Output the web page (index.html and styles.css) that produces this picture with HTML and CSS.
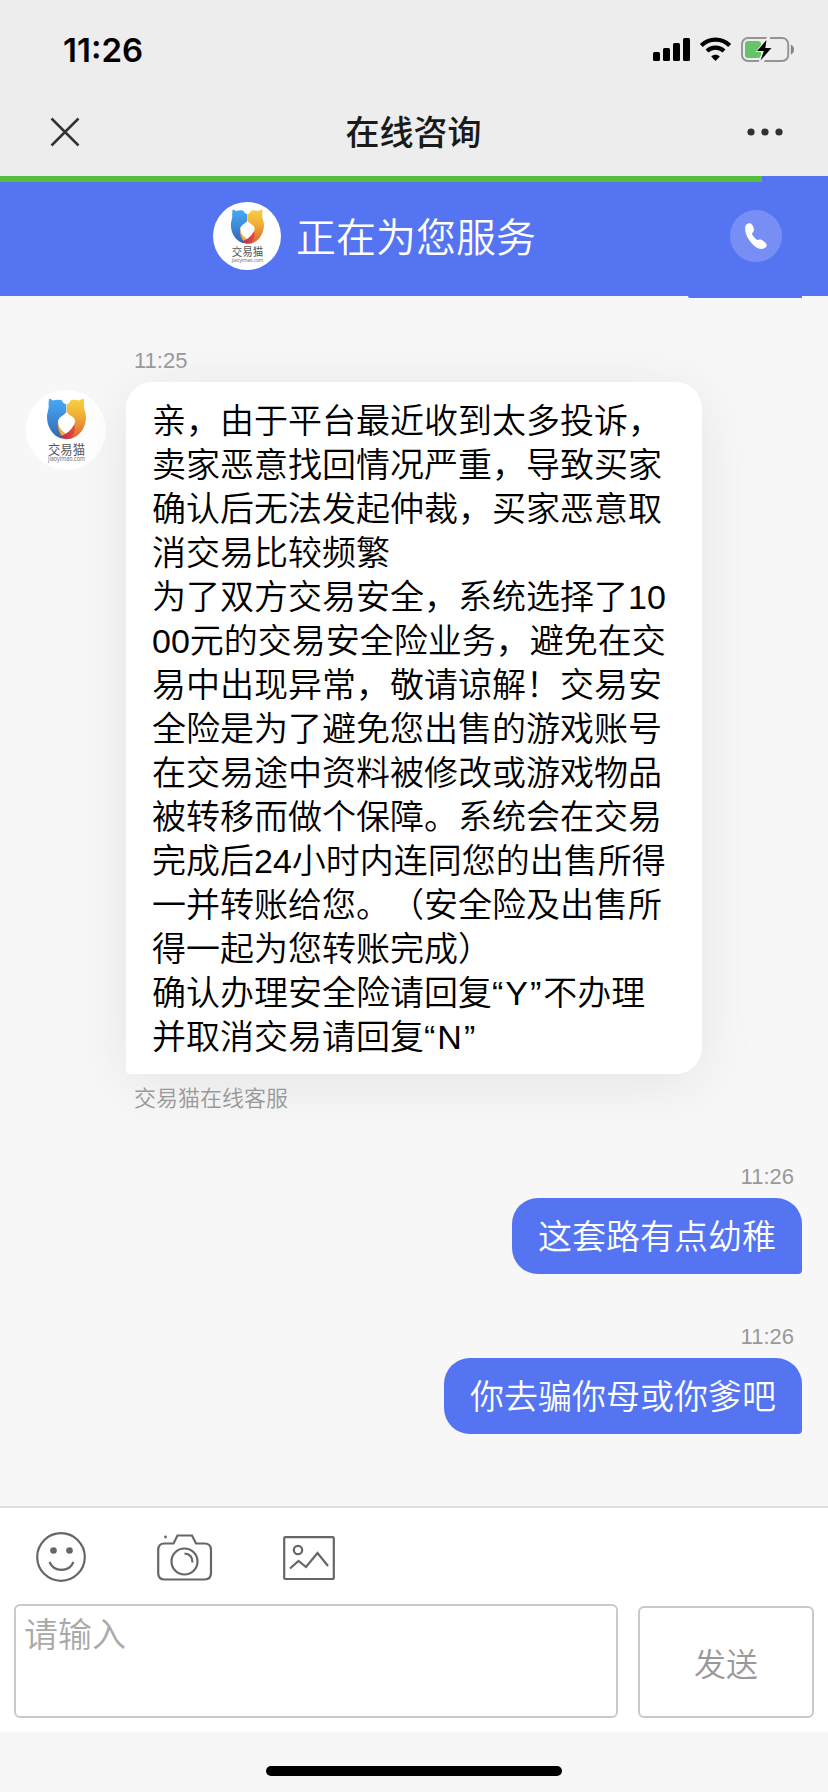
FILE: index.html
```html
<!DOCTYPE html>
<html lang="zh-CN">
<head>
<meta charset="utf-8">
<title>在线咨询</title>
<link rel="stylesheet" href="styles.css">
</head>
<body>
<svg class="defs" aria-hidden="true">
  <defs>
    <linearGradient id="catBlue" x1="0" y1="0" x2="0" y2="1">
      <stop offset="0" stop-color="#45a9f5"/><stop offset=".3" stop-color="#4197e6"/><stop offset="1" stop-color="#3565b0"/>
    </linearGradient>
    <linearGradient id="catGold" x1="0" y1="0" x2="0" y2="1">
      <stop offset="0" stop-color="#f8d044"/><stop offset=".4" stop-color="#f1b136"/><stop offset="1" stop-color="#dd6430"/>
    </linearGradient>
    <linearGradient id="catRed" x1="0" y1="0" x2="1" y2="0">
      <stop offset="0" stop-color="#70409c"/><stop offset=".35" stop-color="#c9304c"/><stop offset="1" stop-color="#e2503a"/>
    </linearGradient>
    <symbol id="logo" viewBox="0 0 80 80">
      <circle cx="40" cy="40" r="40" fill="#fff"/>
      <path d="M23 8.7Q25.500 8.800 27 10.600Q31 9.200 35.500 10Q37 13.500 40.300 14.500V22C38 26 32 26.500 32 32C32 38 35 43 40 48.500C30 50 21 39 21 27C21 22 23.500 18 22.500 14Z" fill="url(#catBlue)"/>
      <path d="M58 8.700Q55 8.800 53.500 10.600Q49 9.200 45 10Q43.500 13.500 40.700 14.500V22C43 26 49 26.500 49 31C49 36 44 40 40.500 45L38 49C51 51 60 39 60 27C60 22 57 18 58 14Z" fill="url(#catGold)"/>
      <path d="M32 31C32 37 36 41 40.500 44L37 47.500C33 43 31 36 32 31Z" fill="#f4ad35"/>
      <path d="M33.500 46.500Q43 44 48.500 34.500Q50 43 45.500 48Q40 50.500 33.500 46.500Z" fill="url(#catRed)"/>
      <text x="40.500" y="64" class="logo-name" textLength="37" lengthAdjust="spacingAndGlyphs">交易猫</text>
      <text x="40.500" y="70.800" class="logo-url" textLength="37" lengthAdjust="spacingAndGlyphs">jiaoyimao.com</text>
    </symbol>
  </defs>
</svg>
<div class="screen">
  <header class="status">
    <span class="clock">11:26</span>
    <svg class="status-icons" width="160" height="40" viewBox="0 0 160 40">
      <rect x="9" y="22" width="7" height="9" rx="1.500"/><rect x="19" y="18" width="7" height="13" rx="1.500"/><rect x="29" y="13" width="7" height="18" rx="1.500"/><rect x="39" y="8" width="7" height="23" rx="1.500"/>
      <path d="M57.300 15.500C65 7.600 78 7.600 85.700 15.500M63 21C67.800 16.400 75.200 16.400 80 21" fill="none" stroke="#000" stroke-width="4.200"/>
      <path d="M71.500 31L67.200 26.500C69.500 24.200 73.500 24.200 75.800 26.500Z"/>
      <rect x="98" y="8" width="46.200" height="23" rx="6" fill="none" stroke="#949494" stroke-width="1.900"/>
      <path d="M146.800 14.500Q150 16 150 19.500Q150 23 146.800 24.500Z" fill="#858585"/>
      <rect x="101" y="11" width="16" height="17" rx="3" fill="#65c466"/>
      <path d="M124 6L111.500 22H118L114.500 33H119L129.500 18H123L126.500 6Z" fill="#ededed"/>
      <path d="M122.500 10L113 21H119.800L116.500 30.500L127.500 18H121.300Z"/>
    </svg>
  </header>
  <nav class="nav">
    <svg width="30" height="30" viewBox="0 0 30 30"><path d="M1.500 1.500L28.500 28.500M28.500 1.500L1.500 28.500" fill="none" stroke="#333" stroke-width="2.500"/></svg>
    <h1 class="nav-title">在线咨询</h1>
    <svg width="36" height="8" viewBox="0 0 36 8" fill="#303030"><circle cx="4" cy="4" r="3.600"/><circle cx="18" cy="4" r="3.600"/><circle cx="32" cy="4" r="3.600"/></svg>
  </nav>
  <div class="service">
    <div class="progress"></div>
    <div class="service-row">
      <svg class="service-logo"><use href="#logo"/></svg>
      <span class="service-text">正在为您服务</span>
      <span class="call"><svg width="52" height="52" viewBox="0 0 52 52"><path d="M15.200 17C15.500 13.700 20 12 22 14.500C23.500 16.500 24.500 19.200 23.500 21.500C22.500 23 21.500 23.500 22.500 25C24 27 25.500 29 27.200 30C29 29 32 29 34 31.500C37 34 37.500 36 35.500 37.500C32 40 28 39 24.500 36C19 31 14.500 24 15.200 17Z" fill="#fff"/></svg></span>
    </div>
  </div>
  <main class="chat">
    <div class="scrolled"></div>
    <section class="incoming">
      <svg class="avatar"><use href="#logo"/></svg>
      <div class="incoming-body">
        <time class="meta">11:25</time>
        <div class="bubble agent">亲，由于平台最近收到太多投诉，<br>卖家恶意找回情况严重，导致买家<br>确认后无法发起仲裁，买家恶意取<br>消交易比较频繁<br>为了双方交易安全，系统选择了10<br>00元的交易安全险业务，避免在交<br>易中出现异常，敬请谅解！交易安<br>全险是为了避免您出售的游戏账号<br>在交易途中资料被修改或游戏物品<br>被转移而做个保障。系统会在交易<br>完成后24小时内连同您的出售所得<br>一并转账给您。（安全险及出售所<br>得一起为您转账完成）<br>确认办理安全险请回复<span class="key">“Y”</span>不办理<br>并取消交易请回复<span class="key">“N”</span></div>
        <span class="meta sender">交易猫在线客服</span>
      </div>
    </section>
    <section class="outgoing">
      <time class="meta">11:26</time>
      <div class="bubble user">这套路有点幼稚</div>
    </section>
    <section class="outgoing">
      <time class="meta">11:26</time>
      <div class="bubble user">你去骗你母或你爹吧</div>
    </section>
  </main>
  <footer class="composer">
    <div class="tools">
      <svg width="50" height="50" viewBox="0 0 50 50" fill="none" stroke="#666" stroke-width="2.200"><circle cx="25" cy="25" r="23.800"/><path d="M13.500 30C18 40.500 33 40.500 37.500 30"/><circle cx="17.500" cy="18.500" r="3.300" fill="#666" stroke="none"/><circle cx="33.500" cy="18.500" r="3.300" fill="#666" stroke="none"/></svg>
      <svg width="56" height="50" viewBox="0 0 56 50" fill="none" stroke="#666" stroke-width="2.200"><path d="M7.500 11.500H16.500L20.500 3.500H35L39 11.500H47.500Q54 11.500 54 18V41Q54 47.500 47.500 47.500H7.500Q1.200 47.500 1.200 41V18Q1.200 11.500 7.500 11.500"/><circle cx="27.500" cy="29.500" r="13"/><path d="M27.500 21.500Q35.500 22 35.500 30.500"/><circle cx="8.500" cy="5" r="1.400" fill="#666" stroke="none"/></svg>
      <svg width="52" height="50" viewBox="0 0 52 50" fill="none" stroke="#666" stroke-width="2.200"><rect x="1.200" y="5.200" width="49.600" height="41.800" rx="1"/><circle cx="15" cy="18" r="4.200"/><path d="M7 36.500L15.500 29L23 35L34.500 21L45 34"/></svg>
    </div>
    <div class="entry">
      <div class="input">请输入</div>
      <div class="send">发送</div>
    </div>
  </footer>
  <div class="home"><div class="home-bar"></div></div>
</div>
</body>
</html>
```
FILE: styles.css
```css
* { box-sizing: border-box; }
body {
  margin: 0;
  font-family: "Liberation Sans", "Noto Sans CJK SC", sans-serif;
  font-weight: 350;
  text-spacing-trim: space-all;
}
svg { display: block; flex: none; }
.defs { position: absolute; width: 0; height: 0; }
.logo-name { font: 13px "Noto Sans CJK SC", sans-serif; fill: #555; text-anchor: middle; }
.logo-url { font: 6.5px "Open Sans", sans-serif; fill: #666; text-anchor: middle; }

.screen {
  width: 828px;
  height: 1792px;
  display: flex;
  flex-direction: column;
  background: #f7f7f7;
  overflow: hidden;
}

.status {
  height: 88px;
  flex: none;
  padding: 30px 24px 0 63px;
  display: flex;
  justify-content: space-between;
  background: #ededed;
}
.clock { font: 600 33px/41px Inter, sans-serif; }

.nav {
  height: 88px;
  flex: none;
  padding: 0 45px 0 50px;
  display: flex;
  align-items: center;
  justify-content: space-between;
  background: #ededed;
}
.nav-title {
  margin: 0;
  padding-bottom: 2px;
  font: 500 34px/86px "Noto Sans CJK SC", sans-serif;
  color: #1a1a1a;
}

.service { height: 120px; flex: none; background: #5574f1; }
.progress { width: 762px; height: 6px; background: #57be3c; }
.service-row {
  height: 108px;
  padding: 0 46px 0 213px;
  display: flex;
  align-items: center;
}
.service-logo { width: 68px; height: 68px; }
.service-text {
  margin-left: 15px;
  padding-bottom: 2px;
  font: 350 40px/60px "Noto Sans CJK SC", sans-serif;
  color: #fff;
}
.call {
  width: 52px;
  height: 52px;
  margin-left: auto;
  border-radius: 50%;
  background: #778ff4;
}

.chat { height: 1210px; flex: none; padding: 0 26px; }
.scrolled {
  width: 114px;
  height: 2px;
  margin-left: auto;
  background: #5574f1;
  border-radius: 0 0 2px 8px;
}
.incoming { display: flex; gap: 20px; padding-top: 49px; }
.avatar { width: 80px; height: 80px; margin-top: 43px; }
.meta {
  display: block;
  font-size: 22px;
  line-height: 28px;
  color: #999;
}
.incoming .meta { margin-left: 8px; }
.incoming .sender { margin-top: 9px; line-height: 32px; }
.bubble {
  font-size: 34px;
  line-height: 44px;
  border-radius: 26px;
  padding: 17px 26px 15px;
  white-space: nowrap;
}
.agent {
  width: 576px;
  margin-top: 7px;
  background: #fff;
  color: #000;
  border-bottom-left-radius: 4px;
  box-shadow: 0 10px 60px rgba(0, 0, 0, .08);
}
.key { letter-spacing: 2px; }
.user {
  margin-top: 7px;
  background: #5574f1;
  color: #fff;
  border-bottom-right-radius: 4px;
}
.outgoing {
  display: flex;
  flex-direction: column;
  align-items: flex-end;
  height: 111px;
}
.incoming + .outgoing { margin-top: 48px; }
.outgoing + .outgoing { margin-top: 49px; }
.outgoing .meta { margin-right: 8px; }

.composer {
  height: 226px;
  flex: none;
  border-top: 2px solid #ddd;
  background: #fff;
}
.tools { display: flex; padding: 24px 0 0 36px; }
.tools svg + svg { margin-left: 71px; }
.tools svg:last-child { margin-left: 70px; }
.entry { display: flex; align-items: flex-end; gap: 20px; padding: 22px 14px 0; }
.input {
  width: 604px;
  height: 114px;
  padding: 6px 8px;
  border: 2px solid #c9c9c9;
  border-radius: 6px;
  font-size: 34px;
  line-height: 46px;
  color: #a9a9a9;
}
.send {
  width: 176px;
  height: 112px;
  border: 2px solid #c9c9c9;
  border-radius: 6px;
  font-size: 32px;
  line-height: 114px;
  text-align: center;
  color: #999;
}
.home { height: 60px; flex: none; padding-top: 34px; }
.home-bar { width: 296px; height: 10px; margin: 0 auto; border-radius: 5px; background: #000; }
```
